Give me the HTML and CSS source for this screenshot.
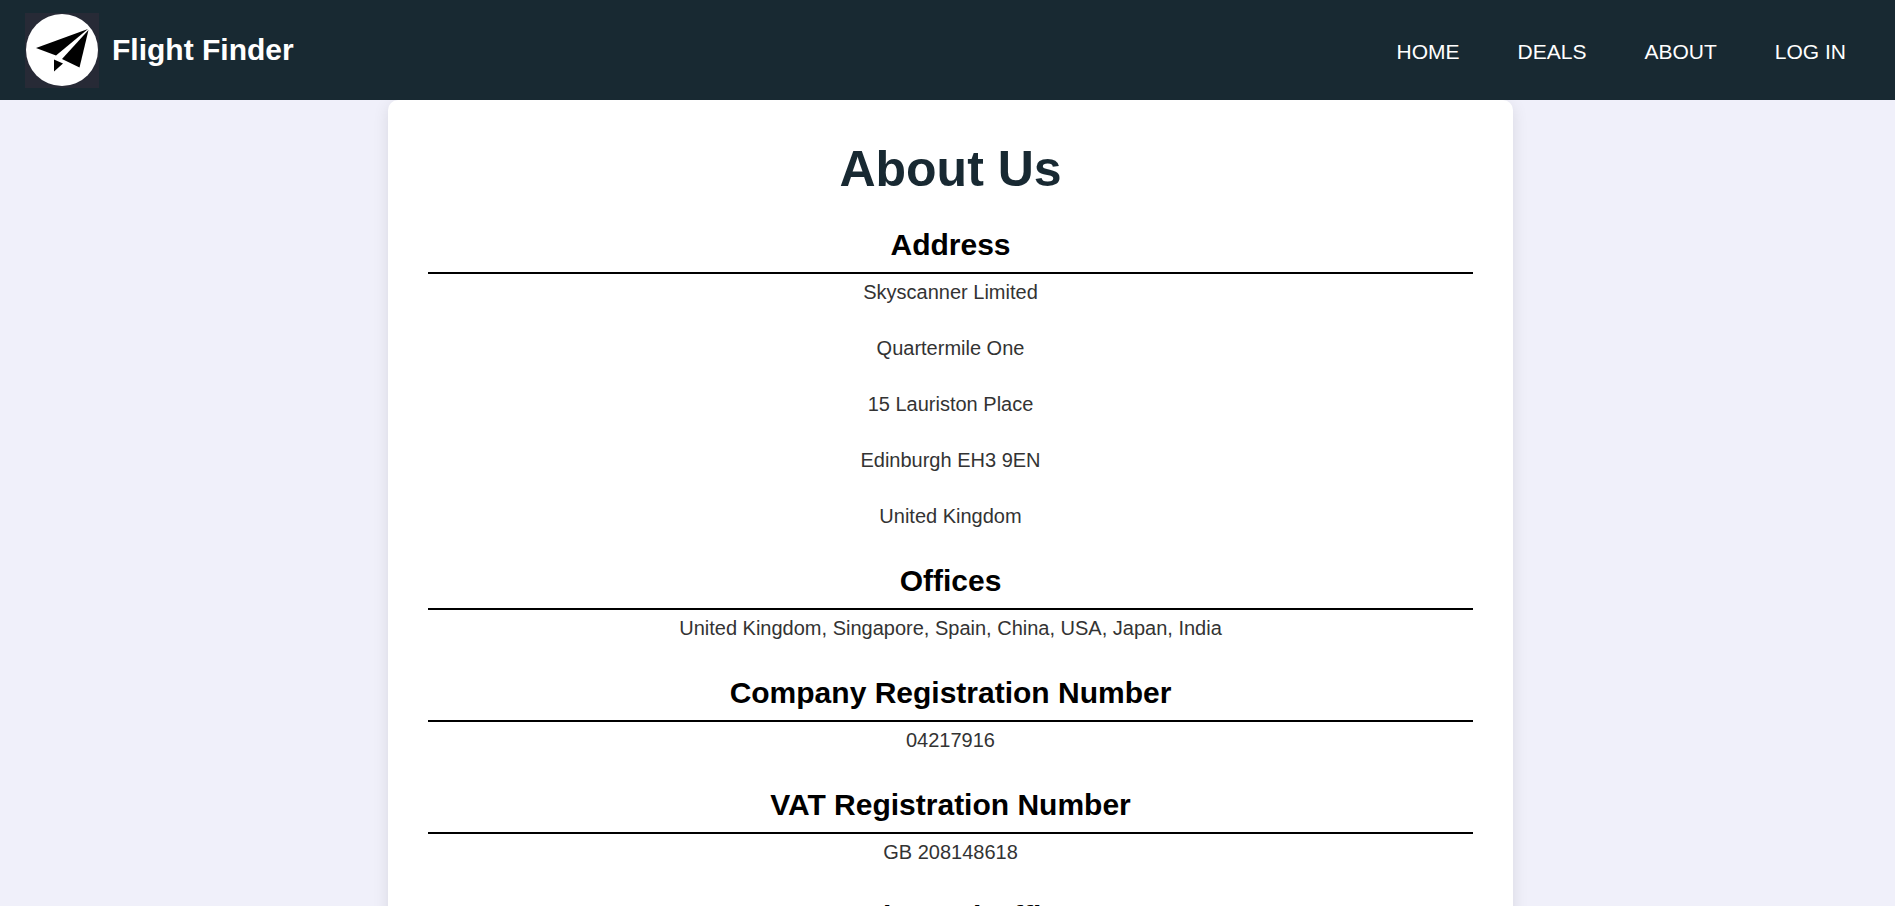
FILE: index.html
```html
<!DOCTYPE html>
<html lang="en">
<head>
<meta charset="utf-8">
<title>About Us - Flight Finder</title>
<link rel="stylesheet" href="styles.css">
</head>
<body>
<header class="site-header">
  <a class="brand" href="#">
    <svg class="brand-logo" viewBox="0 0 74 75" aria-hidden="true">
      <rect width="74" height="75" fill="#272a36"/>
      <circle cx="37" cy="37" r="36" fill="#fff"/>
      <path fill="#000" d="M11 35 63 16 31 42.500Z"/>
      <path fill="#000" d="M63.500 17 54.500 54.500 37 46Z"/>
      <path fill="#000" d="M29 46.500 38 50.500 29 58.500Z"/>
    </svg>
    <span class="brand-name">Flight Finder</span>
  </a>
  <nav class="site-nav">
    <a href="#">HOME</a>
    <a href="#">DEALS</a>
    <a href="#">ABOUT</a>
    <a href="#">LOG IN</a>
  </nav>
</header>
<main class="page">
  <article class="card">
    <h1>About Us</h1>
    <h2>Address</h2>
    <p>Skyscanner Limited</p>
    <p>Quartermile One</p>
    <p>15 Lauriston Place</p>
    <p>Edinburgh EH3 9EN</p>
    <p>United Kingdom</p>
    <h2>Offices</h2>
    <p>United Kingdom, Singapore, Spain, China, USA, Japan, India</p>
    <h2>Company Registration Number</h2>
    <p>04217916</p>
    <h2>VAT Registration Number</h2>
    <p>GB 208148618</p>
    <h2>Registered Office</h2>
  </article>
</main>
</body>
</html>
```

FILE: styles.css
```css
* {
  box-sizing: border-box;
}

body {
  margin: 0;
  background: #f0f0fa;
  color: #333;
  font-family: "Liberation Sans", Arial, sans-serif;
}

.site-header {
  position: relative;
  display: flex;
  align-items: center;
  justify-content: space-between;
  height: 100px;
  padding: 0 49px 0 25px;
  background: #182932;
}

.site-header a {
  color: #fff;
  text-decoration: none;
}

.brand {
  display: flex;
  align-items: center;
  gap: 13px;
}

.brand-logo {
  width: 74px;
  height: 75px;
}

.brand-name {
  font-size: 30px;
  font-weight: bold;
  line-height: 34px;
}

.site-nav {
  display: flex;
  gap: 58px;
  padding-top: 4px;
  font-size: 21px;
  line-height: 24px;
}

.page {
  padding-left: 6px;
}

.card {
  max-width: 1125px;
  margin: 0 auto;
  padding: 40px;
  border-radius: 10px;
  background: #fff;
  box-shadow: 0 4px 16px rgba(0, 0, 0, 0.1);
  text-align: center;
}

.card h1 {
  margin: 0 0 30px;
  color: #182932;
  font-size: 50px;
  line-height: 58px;
}

.card h2 {
  margin: 30px 0 0;
  padding-bottom: 10px;
  border-bottom: 2px solid #000;
  color: #000;
  font-size: 30px;
  line-height: 34px;
}

.card p {
  margin: 0 0 20px;
  font-size: 20px;
  line-height: 36px;
}
```
